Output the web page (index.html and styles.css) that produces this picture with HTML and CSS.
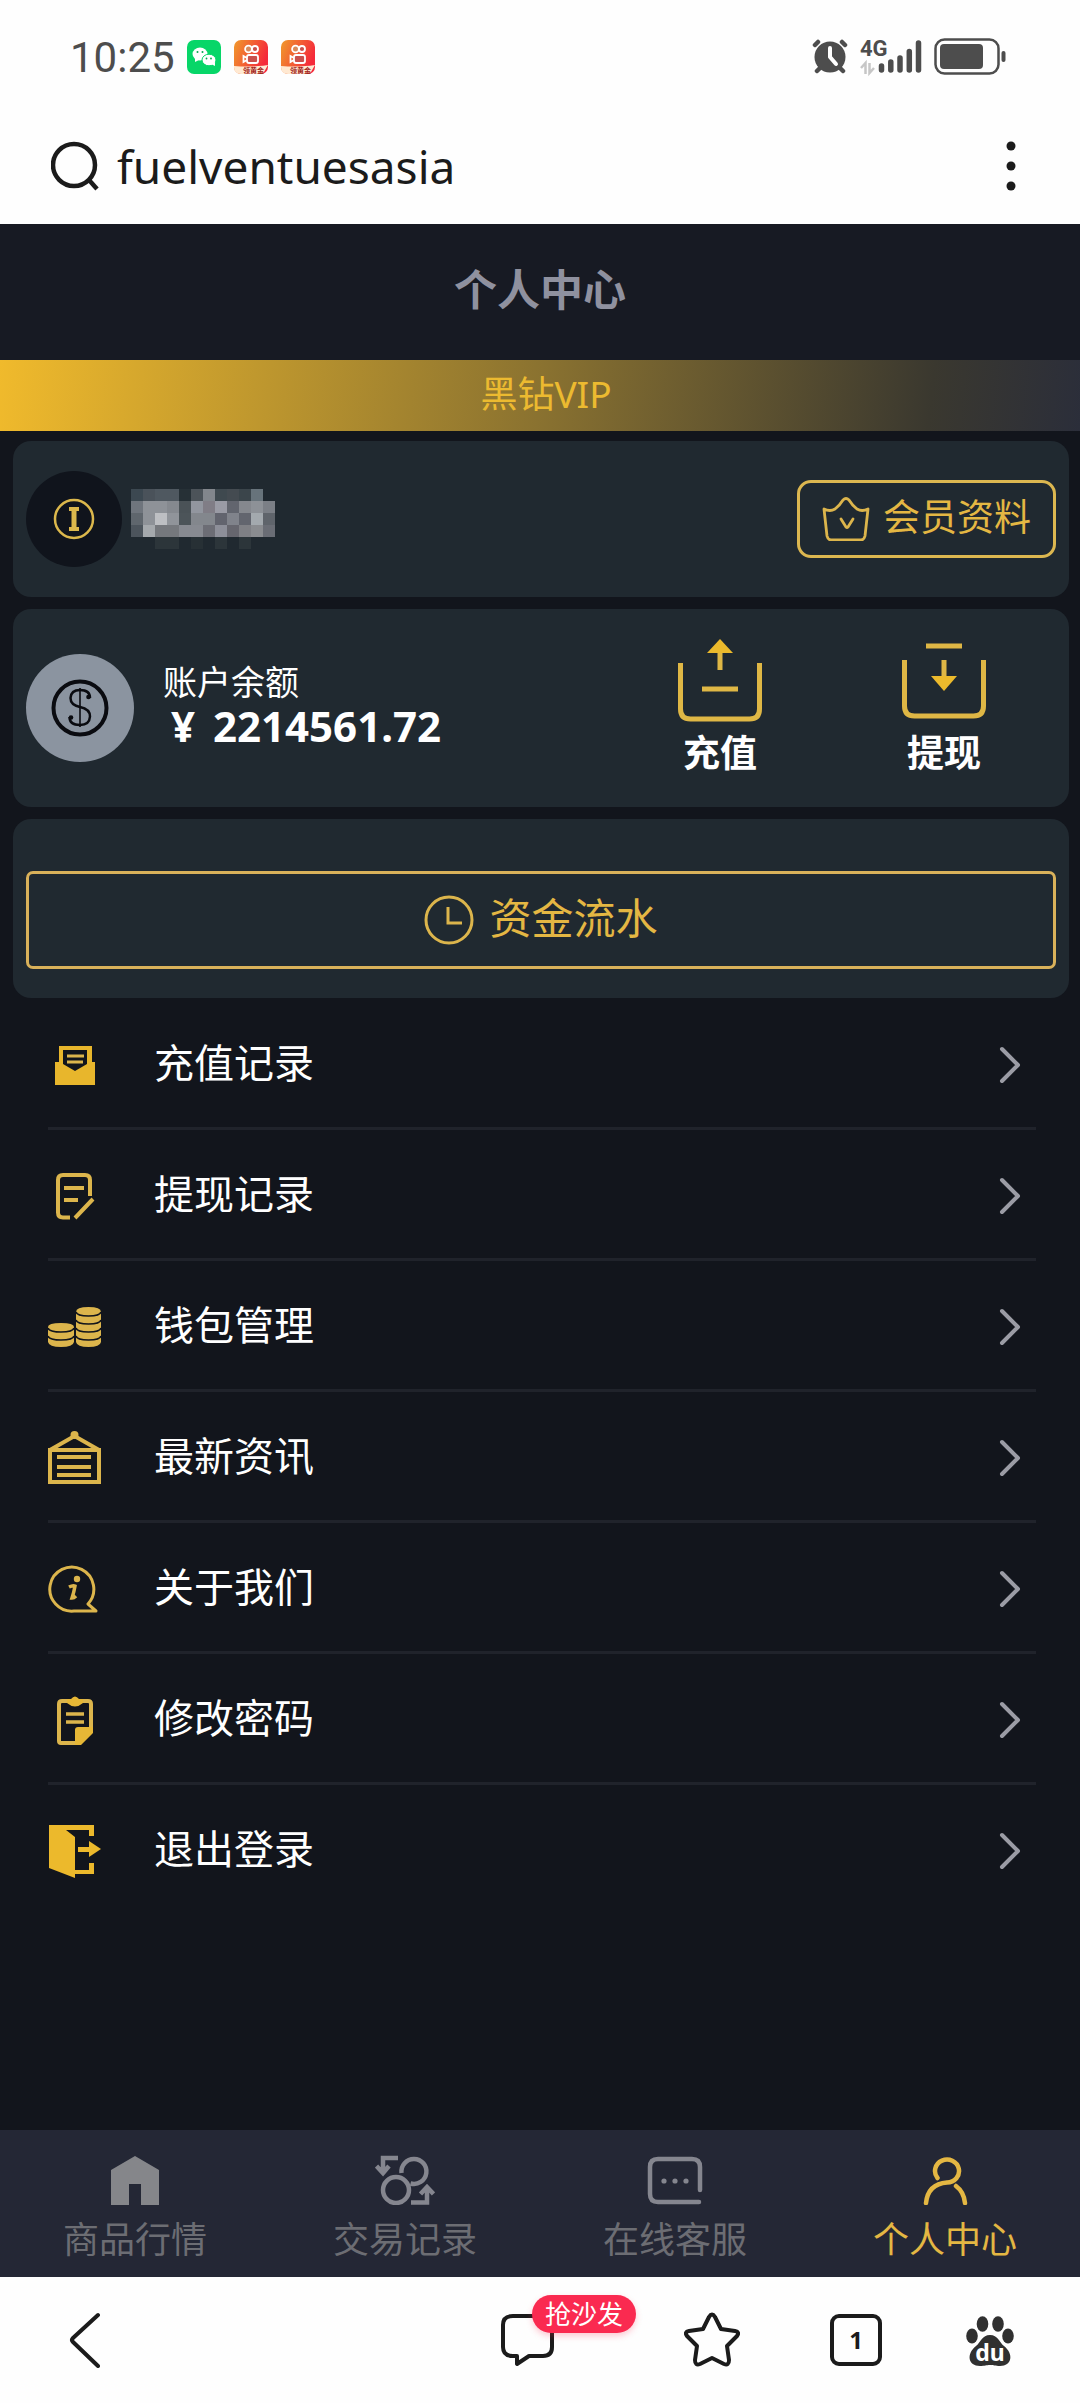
FILE: index.html
```html
<!DOCTYPE html>
<html lang="zh-CN">
<head>
<meta charset="utf-8">
<meta name="viewport" content="width=device-width, initial-scale=1">
<title>个人中心</title>
<link rel="stylesheet" href="styles.css">
</head>
<body>
<svg width="0" height="0" class="defs" aria-hidden="true">
  <defs>
    <linearGradient id="warm" x1="0" y1="0" x2="1" y2="0.4"><stop offset="0" stop-color="#f09a2c"/><stop offset="1" stop-color="#f5293a"/></linearGradient>
    <symbol id="video-app" viewBox="0 0 34 34">
      <rect width="34" height="34" rx="7" fill="url(#warm)"/>
      <g stroke="#fff" stroke-width="1.800"><circle cx="14.500" cy="9" r="3.400" fill="#d98a5c"/><circle cx="21" cy="9" r="3" fill="#c9504c"/><rect x="13" y="15" width="11" height="8" rx="2" fill="#c9504c"/><path d="M13 18 9.500 16v6l3.500-2" fill="none"/></g>
      <path d="M0 26q14 1 24 0 5 0 10-1l-4 7-5 2H7q-7 0-7-7z" fill="#ffe9d2"/>
      <text x="9" y="33" font-size="7" font-weight="700" fill="#a3271c">领黄金</text>
    </symbol>
    <symbol id="chevron" viewBox="0 0 24 40"><path d="M4 4 20 20 4 36" fill="none" stroke="#9b9ca5" stroke-width="4" stroke-linecap="round" stroke-linejoin="round"/></symbol>
  </defs>
</svg>

<header class="status">
  <time class="clock">10:25</time>
  <div class="apps">
    <svg viewBox="0 0 34 34"><rect width="34" height="34" rx="7" fill="#07d668"/><ellipse cx="13" cy="14" rx="7.500" ry="6.500" fill="#fff"/><path d="M8 18v4l4-2z" fill="#fff"/><ellipse cx="22" cy="20" rx="7" ry="5.800" fill="#fff" stroke="#07d668"/><path d="m24 24 4 2v-4z" fill="#fff"/><g fill="#07a650"><circle cx="10.500" cy="12" r="1"/><circle cx="15.500" cy="12" r="1"/><circle cx="19.500" cy="18.500" r=".9"/><circle cx="24" cy="18.500" r=".9"/></g></svg>
    <svg viewBox="0 0 34 34"><use href="#video-app"/></svg>
    <svg viewBox="0 0 34 34"><use href="#video-app"/></svg>
  </div>
  <div class="signals">
    <svg class="alarm" viewBox="0 0 36 36"><g stroke="#4d4d4d" stroke-width="4.500" stroke-linecap="round"><path d="M3 6 6 3M33 6l-3-3M5 32l4-4M31 32l-4-4"/></g><circle cx="18" cy="18" r="15.500" fill="#4d4d4d"/><path d="M18 9v9l6 7" fill="none" stroke="#fff" stroke-width="4" stroke-linecap="round" stroke-linejoin="round"/></svg>
    <svg class="network" viewBox="0 -6 62 48"><text x="0" y="17" font-size="22" font-weight="700" fill="#4d4d4d" class="gen">4G</text><g fill="none" stroke="#c6c6c6" stroke-width="2.500"><path d="M5.500 35V24L1 29M9.500 24v10l4.500-5"/></g><g stroke="#4d4d4d" stroke-width="5.500" stroke-linecap="round"><path d="M21.500 31v-4M30.800 31v-8M40 31v-12M49.300 31V12.500M58.500 31V4"/></g></svg>
    <svg class="battery" viewBox="0 0 74 38"><rect x="1.500" y="1.500" width="63" height="34" rx="9" fill="none" stroke="#4d4d4d" stroke-width="2.500"/><rect x="6" y="6" width="43" height="25" rx="4" fill="#4d4d4d"/><path d="M69.500 15v7" stroke="#4d4d4d" stroke-width="4" stroke-linecap="round"/></svg>
  </div>
</header>

<form class="address">
  <label for="url"><svg viewBox="0 0 50 50" role="img" aria-label="搜索"><g fill="none" stroke="#1b1b1b" stroke-width="4.500"><circle cx="23" cy="24" r="21"/><path d="m38 39 8 9"/></g></svg></label>
  <input id="url" type="text" value="fuelventuesasia">
  <button type="button" aria-label="更多"><svg viewBox="0 0 10 50"><g fill="#1b1b1b"><circle cx="5" cy="5" r="4.500"/><circle cx="5" cy="25" r="4.500"/><circle cx="5" cy="45" r="4.500"/></g></svg></button>
</form>

<main class="page">
  <h1 class="title">个人中心</h1>
  <p class="vip">黑钻VIP</p>

  <section class="card profile">
    <svg class="avatar" viewBox="0 0 96 96"><circle cx="48" cy="48" r="48" fill="#10141c"/><circle cx="48" cy="48" r="19" fill="none" stroke="#dcb84c" stroke-width="2.500"/><path d="M43 36h10v4h-2.500v16H53v4H43v-4h2.500V40H43z" fill="#dcb84c"/></svg>
    <svg class="masked" viewBox="0 0 12 5" shape-rendering="crispEdges" role="img" aria-label="用户名">
      <g><path d="M0 0h1v1H0z" fill="#3c4851"/><path d="M1 0h1v1H1z" fill="#4a525a"/><path d="M2 0h2v1H2z" fill="#4f5860"/><path d="M4 0h1v1H4z" fill="#263036"/><path d="M5 0h1v1H5z" fill="#4c5359"/><path d="M6 0h1v1H6z" fill="#82868c"/><path d="M7 0h1v1H7z" fill="#3f494f"/><path d="M8 0h1v1H8z" fill="#444b51"/><path d="M9 0h1v1H9z" fill="#3b454b"/><path d="M10 0h1v1h-1z" fill="#67737b"/></g>
      <g><path d="M0 1h1v1H0z" fill="#6f757d"/><path d="M1 1h2v1H1z" fill="#8e9298"/><path d="M3 1h1v1H3z" fill="#85898f"/><path d="M4 1h1v1H4z" fill="#4a5257"/><path d="M5 1h1v1H5z" fill="#92969f"/><path d="M6 1h1v1H6z" fill="#807d86"/><path d="M7 1h1v1H7z" fill="#9a9ba5"/><path d="M8 1h1v1H8z" fill="#62656e"/><path d="M9 1h1v1H9z" fill="#85888e"/><path d="M10 1h1v1h-1z" fill="#8d9197"/><path d="M11 1h1v1h-1z" fill="#7b7f86"/></g>
      <g><path d="M0 2h1v1H0z" fill="#5f666d"/><path d="M1 2h1v1H1z" fill="#8e9298"/><path d="M2 2h1v1H2z" fill="#bdbfc3"/><path d="M3 2h1v1H3z" fill="#90949a"/><path d="M4 2h1v1H4z" fill="#4c5459"/><path d="M5 2h2v1H5z" fill="#83878d"/><path d="M7 2h1v1H7z" fill="#62646e"/><path d="M8 2h1v1H8z" fill="#80838b"/><path d="M9 2h1v1H9z" fill="#62656e"/><path d="M10 2h1v1h-1z" fill="#a3a9ae"/><path d="M11 2h1v1h-1z" fill="#5f646b"/></g>
      <g><path d="M0 3h1v1H0z" fill="#4c545c"/><path d="M1 3h1v1H1z" fill="#a5a9ad"/><path d="M2 3h2v1H2z" fill="#75787d"/><path d="M4 3h2v1H4z" fill="#878a91"/><path d="M6 3h1v1H6z" fill="#6c6d75"/><path d="M7 3h1v1H7z" fill="#8d8f99"/><path d="M8 3h1v1H8z" fill="#66666e"/><path d="M9 3h1v1H9z" fill="#7f8085"/><path d="M10 3h1v1h-1z" fill="#8a8c90"/><path d="M11 3h1v1h-1z" fill="#6a6d75"/></g>
      <g fill="#2c353a"><path d="M2 4h1v1H2z"/><path d="M3 4h1v1H3z"/><path d="M5 4h1v1H5z" fill="#273035"/><path d="M7 4h1v1H7z"/><path d="M9 4h1v1H9z"/></g>
    </svg>
    <button type="button" class="member">
      <svg viewBox="0 0 48 44"><g fill="none" stroke="#dcb54c" stroke-width="2.800" stroke-linejoin="round" stroke-linecap="round"><path d="M2 12q6 3 11 0 5-4 8-9 3-3 6 0 3 5 8 9 5 3 11 0l-3 27q-1 4-4 4H9q-3 0-4-4z"/><path d="m19 22 5 8q1 1 2 0l5-8"/></g></svg>
      <span>会员资料</span>
    </button>
  </section>

  <section class="card balance">
    <svg class="coin" viewBox="0 0 108 108"><circle cx="54" cy="54" r="54" fill="#8b94a0"/><circle cx="54" cy="54" r="26.500" fill="none" stroke="#0a0b10" stroke-width="4"/><path d="M64 44q0-8-10-8-9 0-9.500 8 0 7 9.500 9 10 2 10 9.500-.500 8.500-10 8.500-10.500 0-10.500-8" fill="none" stroke="#0a0b10" stroke-width="2.500"/><path d="M54 34v39" stroke="#0a0b10" stroke-width="1.600"/><g fill="#0a0b10"><circle cx="62.500" cy="43" r="2.300"/><circle cx="45" cy="63.500" r="2.300"/></g></svg>
    <div class="figures">
      <span class="label">账户余额</span>
      <strong class="amount"><span class="yen">¥</span>2214561.72</strong>
    </div>
    <div class="actions">
      <button type="button"><svg viewBox="0 0 84 84"><path d="M2.500 25v46q0 10 10 10h59q10 0 10-10V25M24 51h36M42 13v19" fill="none" stroke="#dfb745" stroke-width="5"/><path d="M42 1 55 15H29z" fill="#ecba2c"/></svg>充值</button>
      <button type="button"><svg viewBox="0 0 84 84"><path d="M2.500 22v46q0 10 10 10h59q10 0 10-10V22M24 8h36M42 22v17" fill="none" stroke="#dfb745" stroke-width="5"/><path d="M42 53 55 38H29z" fill="#ecba2c"/></svg>提现</button>
    </div>
  </section>

  <section class="card ledger">
    <button type="button" class="flow">
      <svg viewBox="0 0 50 50"><g fill="none" stroke="#dcb54c" stroke-width="3"><circle cx="25" cy="25" r="23"/><path d="M24 12v16h14"/></g></svg>
      <span>资金流水</span>
    </button>
  </section>

  <nav class="menu">
    <a href="#deposits"><svg class="icon" viewBox="0 0 54 54"><path d="M7 24h4V8h33v16h3v23H7z" fill="#e8b62c"/><path d="M15 12h24v14L27 33 15 26z" fill="#12151c"/><path d="M19 18h17M19 24h16" stroke="#dcb54c" stroke-width="3"/></svg><span>充值记录</span><svg class="go"><use href="#chevron"/></svg></a>
    <a href="#withdrawals"><svg class="icon" viewBox="0 0 54 54"><g fill="none" stroke="#dcb54c" stroke-width="4" stroke-linejoin="round"><path d="M22 48.500h-7q-5 0-5-5V11q0-5 5-5h22q5 0 5 5v16M16 19h20M16 31h14M27 49l18-19"/></g></svg><span>提现记录</span><svg class="go"><use href="#chevron"/></svg></a>
    <a href="#wallet"><svg class="icon" viewBox="0 0 54 54"><g fill="#dcb54c"><path d="M0 27q0-4 13-4t13 4v15q-1 5-13 5T0 42z"/><path d="M28 12q0-5 12.500-5T53 12v30q-1 5-12.500 5T28 42z"/></g><g fill="none" stroke="#12151c" stroke-width="1.600"><path d="M0 28q1 4 13 4t13-4M0 36q1 4 13 4t13-4M28 12q1 4 12.500 4T53 12M28 20q1 4 12.500 4T53 20M28 28q1 4 12.500 4T53 28M28 36q1 4 12.500 4T53 36"/></g></svg><span>钱包管理</span><svg class="go"><use href="#chevron"/></svg></a>
    <a href="#news"><svg class="icon" viewBox="0 0 54 54"><circle cx="26.500" cy="4" r="4" fill="#dcb54c"/><g fill="none" stroke="#dcb54c" stroke-width="4"><path d="M2 19h49v32H2zM2 19 26.500 5 51 19M9 26h34M9 36h34M9 44h34"/></g></svg><span>最新资讯</span><svg class="go"><use href="#chevron"/></svg></a>
    <a href="#about"><svg class="icon" viewBox="0 0 54 54"><path d="M40 42a22 22 0 1 0-14 7h22z" fill="none" stroke="#dcb54c" stroke-width="3" stroke-linejoin="round"/><circle cx="29" cy="17" r="3.200" fill="#dcb54c"/><path d="M21 25q4-2 6-1-1 6-3 12 2 0 4-2" fill="none" stroke="#dcb54c" stroke-width="3.500"/></svg><span>关于我们</span><svg class="go"><use href="#chevron"/></svg></a>
    <a href="#password"><svg class="icon" viewBox="0 0 54 54"><path d="M43 35V11q0-3-3-3H14q-3 0-3 3v37q0 2 2 2h18" fill="none" stroke="#dcb54c" stroke-width="4"/><path d="M19 6h4q4-5 8 0h4v4q-8 7-16 0zM27 37q0-3 3-3h15L45 40 33 52h-6z" fill="#e6b736"/><path d="M18 21h18M18 29h18" stroke="#dcb54c" stroke-width="3.500"/></svg><span>修改密码</span><svg class="go"><use href="#chevron"/></svg></a>
    <a href="#logout"><svg class="icon" viewBox="0 0 54 54"><path d="M1 1h45v11h-5V6H18l9 7v33h14v-7h5v11H27v4L1 44z" fill="#ecb92c"/><path d="M30 23h11v-6l12 8-12 8v-5H30z" fill="#ecb92c"/></svg><span>退出登录</span><svg class="go"><use href="#chevron"/></svg></a>
  </nav>
</main>

<nav class="tabs">
  <a href="#market"><svg viewBox="0 0 60 50"><path d="M30 1 54 15v35H36V29H24v21H6V15z" fill="#85868a"/></svg>商品行情</a>
  <a href="#trades"><svg viewBox="0 0 60 50"><g fill="none" stroke="#85868f" stroke-width="4.500"><path d="M26.500 18a12.500 12.500 0 1 1 9 10.500"/><circle cx="21" cy="35" r="13"/><path d="M23 3H8v14M1.500 11 8 18l6-7M36 47.500h16V33M45.500 39l6.500-7 6.500 7"/></g></svg>交易记录</a>
  <a href="#service"><svg viewBox="0 0 60 50"><path d="M55 35V12q0-8-8-8H13q-8 0-8 8v27q0 8 8 8h41" fill="none" stroke="#85868f" stroke-width="4.500" stroke-linecap="round"/><g fill="#85868f"><circle cx="19" cy="26" r="2.600"/><circle cx="30" cy="26" r="2.600"/><circle cx="41" cy="26" r="2.600"/></g></svg>在线客服</a>
  <a href="#me" class="active"><svg viewBox="0 0 60 50"><path d="M22.500 23a12 11.500 0 1 1 9.500 4.500Q13 29 11 48M41 31q8 6 9 17" fill="none" stroke="#e4b743" stroke-width="4.500" stroke-linecap="round"/></svg>个人中心</a>
</nav>

<footer class="browser">
  <button type="button" class="back" aria-label="返回"><svg viewBox="0 0 56 56"><path d="M40 3 15 26q-2 2 0 4l25 24" fill="none" stroke="#1b1b1b" stroke-width="4" stroke-linecap="round"/></svg></button>
  <button type="button" class="comment" aria-label="评论"><svg viewBox="0 0 56 56"><path d="M14 4h30q9 0 9 9v22q0 9-9 9H30l-12 8v-8h-4q-10 0-10-9V13q0-9 10-9z" fill="none" stroke="#1b1b1b" stroke-width="4" stroke-linejoin="round"/></svg><span class="badge">抢沙发</span></button>
  <button type="button" aria-label="收藏"><svg viewBox="0 0 56 56"><path d="M25 5q3-5 6 0l6 12 14 2q5 1 2 5L43 34l2 14q0 6-5 4l-12-6-12 6q-5 2-5-4l2-14L3 24q-3-4 2-5l14-2z" fill="none" stroke="#1b1b1b" stroke-width="4" stroke-linejoin="round"/></svg></button>
  <button type="button" aria-label="标签页"><span class="count">1</span></button>
  <button type="button" aria-label="百度"><svg viewBox="0 0 56 56"><g fill="#303030"><ellipse cx="10" cy="24" rx="5.800" ry="7.500"/><ellipse cx="20.500" cy="12" rx="5.800" ry="7.800"/><ellipse cx="36" cy="12" rx="5.800" ry="7.800"/><ellipse cx="46" cy="24" rx="5.800" ry="7.500"/><path d="M28 23c8 0 9 7 14 11 10 8 8 20-4 20-5 0-6-1-10-1s-5 1-10 1c-12 0-14-12-4-20 5-4 6-11 14-11z"/></g><text x="28" y="49" text-anchor="middle" font-size="23" font-weight="700" fill="#fff">du</text></svg></button>
</footer>
</body>
</html>
```
FILE: styles.css
```css
* { box-sizing: border-box; }

body {
  margin: 0;
  min-height: 100vh;
  display: flex;
  flex-direction: column;
  background: #fefefe;
  color: #fff;
  font-family: "Noto Sans", "Noto Sans CJK SC", sans-serif;
}

.defs { position: absolute; }
svg { display: block; flex: none; }

button {
  border: 0;
  padding: 0;
  background: none;
  color: inherit;
  font: inherit;
  cursor: pointer;
}

a { color: inherit; text-decoration: none; }

/* Phone status bar */
.status {
  display: flex;
  align-items: center;
  height: 114px;
  padding: 0 72px 0 70px;
  color: #4d4d4d;
}
.clock { padding-top: 2px; font: 42px/48px Roboto, sans-serif; }
.apps { display: flex; gap: 13px; margin-left: 12px; }
.apps svg { width: 34px; height: 34px; }
.signals { display: flex; align-items: center; gap: 12px; margin-left: auto; }
.alarm { width: 36px; height: 36px; }
.network { width: 62px; height: 48px; }
.battery { width: 74px; height: 38px; }
.gen { font-family: Roboto, sans-serif; }

/* Browser address bar */
.address {
  display: flex;
  align-items: center;
  gap: 16px;
  height: 110px;
  padding: 0 64px 6px 51px;
}
.address label svg { width: 50px; height: 50px; }
.address input {
  flex: 1;
  min-width: 0;
  border: 0;
  padding: 0;
  outline: 0;
  background: none;
  color: #1b1b1b;
  font: 46px/60px "Noto Sans", sans-serif;
}
.address button svg { width: 10px; height: 50px; }

/* Page */
.page { flex: 1; background: #12151c; }
.title {
  margin: 0;
  padding: 34px 0 38px;
  background: #171a23;
  color: #8f919f;
  font-size: 43px;
  font-weight: 700;
  line-height: 64px;
  text-align: center;
}
.vip {
  margin: 0 0 10px;
  padding: 7px 0 10px 12px;
  background: linear-gradient(96deg, #f0ba2c, #8a7230 50%, #3a382f 86%, #2b2e3a);
  color: #ecba30;
  font-size: 37px;
  line-height: 54px;
  text-align: center;
}

.card {
  display: flex;
  align-items: center;
  margin: 0 11px 12px 13px;
  padding: 29px 13px;
  border-radius: 18px;
  background: #202930;
}

.profile { padding: 30px 13px; }
.avatar { width: 96px; height: 96px; }
.masked { width: 144px; height: 60px; margin-left: 9px; }
.member {
  display: flex;
  align-items: center;
  gap: 13px;
  height: 78px;
  margin-left: auto;
  padding: 0 22px;
  border: 3px solid #dcb750;
  border-radius: 14px;
  color: #e4b743;
  font-size: 37px;
  line-height: 56px;
}
.member svg { width: 48px; height: 44px; }
.member span, .flow span { padding-bottom: 4px; }

.coin { width: 108px; height: 108px; }
.figures {
  display: flex;
  flex-direction: column;
  margin-left: 29px;
  padding-bottom: 8px;
  line-height: 44px;
}
.label { font-size: 34px; }
.amount { font-size: 42px; font-weight: 700; }
.yen { display: inline-block; width: 50px; padding-left: 8px; }
.actions { display: flex; margin-left: auto; }
.actions button {
  display: flex;
  flex-direction: column;
  align-items: center;
  gap: 6px;
  width: 224px;
  font-size: 37px;
  font-weight: 700;
  line-height: 50px;
}
.actions svg { width: 84px; height: 84px; }

.ledger { margin-bottom: 0; padding: 52px 13px 29px; }
.flow {
  flex: 1;
  display: flex;
  align-items: center;
  justify-content: center;
  gap: 15px;
  height: 98px;
  border: 3px solid #d9b15a;
  border-radius: 7px;
  color: #e4b743;
  font-size: 42px;
  line-height: 60px;
}
.flow svg { width: 50px; height: 50px; }

.menu { padding: 1px 44px 0 48px; }
.menu a {
  display: flex;
  align-items: center;
  height: 131px;
  padding-top: 4px;
  border-bottom: 3px solid #20232b;
  font-size: 40px;
  line-height: 60px;
}
.menu a:last-child { border-bottom-color: transparent; }
.menu span { flex: 1; margin-left: 52px; padding-bottom: 4px; }
.icon { width: 54px; height: 54px; }
.go { width: 24px; height: 40px; margin-right: 14px; }

/* Site tab bar */
.tabs {
  display: grid;
  grid-template-columns: repeat(4, 1fr);
  background: #242735;
  color: #6c6d73;
  font-size: 36px;
  line-height: 54px;
}
.tabs a {
  display: flex;
  flex-direction: column;
  align-items: center;
  gap: 8px;
  padding: 25px 0 10px;
}
.tabs svg { width: 60px; height: 50px; }
.tabs .active { color: #e4b743; }

/* Browser tool bar */
.browser {
  display: grid;
  grid-template-columns: 172fr 262fr 186fr 184fr 104fr 164fr 8fr;
  align-items: center;
  justify-items: center;
  height: 126px;
  color: #1b1b1b;
}
.browser button { position: relative; }
.browser svg { width: 56px; height: 56px; }
.comment { grid-column: 3; }
.badge {
  position: absolute;
  left: 33px;
  top: -17px;
  padding: 0 13px;
  border-radius: 19px;
  background: #fa2a50;
  box-shadow: 0 3px 6px #fa2a5040;
  color: #fff;
  font-size: 26px;
  line-height: 38px;
  white-space: nowrap;
}
.count {
  display: block;
  width: 52px;
  height: 52px;
  border: 4px solid #1b1b1b;
  border-radius: 9px;
  font-size: 24px;
  font-weight: 700;
  line-height: 44px;
}
```
